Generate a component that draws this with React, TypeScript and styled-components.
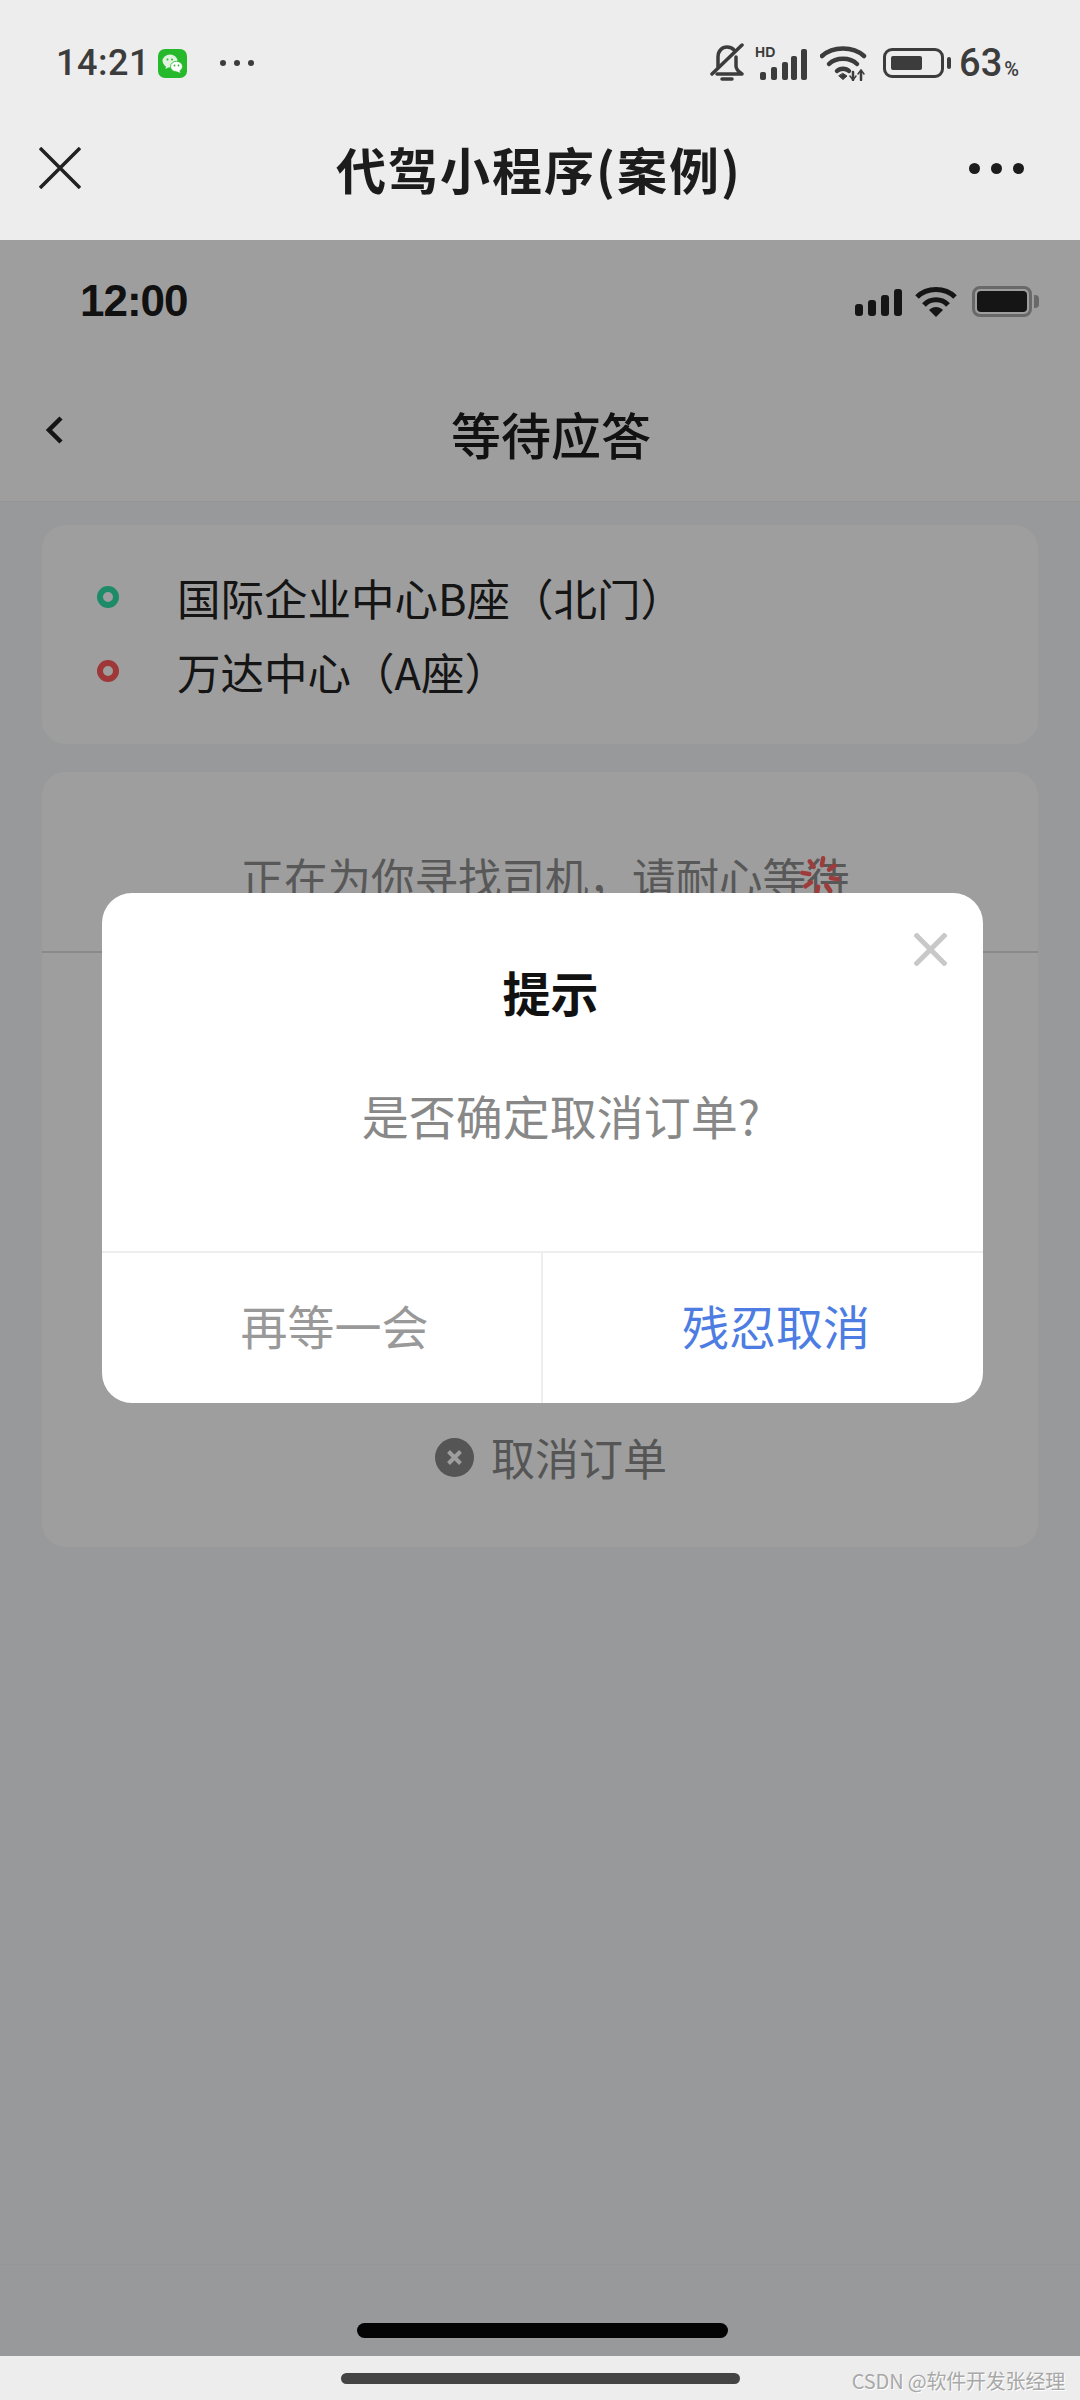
import { styled, createGlobalStyle } from "styled-components";

const cjk = `"Noto Sans CJK SC", "Noto Sans", sans-serif`;

const GlobalStyle = createGlobalStyle`
  html, body {
    margin: 0;
    padding: 0;
    background: #ededed;
  }
  * {
    box-sizing: border-box;
  }
`;

const BellOff = () => (
  <svg width="36" height="40" viewBox="0 0 36 40" fill="none" stroke="#3c3c3c" strokeWidth="3.5" strokeLinecap="round" strokeLinejoin="round">
    <path d="M9 24 V14 C9 8 13 4 18 4 C21 4 23.5 5 25.5 7.5" />
    <path d="M27 14 V23 C27 27 30 29 33 31 H8" />
    <path d="M3 31 L33 2" />
    <path d="M13 36 H23" strokeWidth="3.5" />
  </svg>
);

const WeChatIcon = () => (
  <svg width="29" height="29" viewBox="0 0 29 29">
    <rect width="29" height="29" rx="7" fill="#27b92c" />
    <ellipse cx="12" cy="12" rx="7.5" ry="6.5" fill="#dff3df" />
    <path d="M8 16 L7.5 20 L12 17.5 Z" fill="#dff3df" />
    <ellipse cx="18.5" cy="17.5" rx="6" ry="5.2" fill="#fff" stroke="#27b92c" strokeWidth="0.8" />
    <path d="M21 21 L22.5 24 L18 22 Z" fill="#fff" />
    <circle cx="9.5" cy="10.5" r="1" fill="#27b92c" />
    <circle cx="14" cy="10.5" r="1" fill="#27b92c" />
    <circle cx="16.5" cy="16.5" r="0.9" fill="#27b92c" />
    <circle cx="20.5" cy="16.5" r="0.9" fill="#27b92c" />
  </svg>
);

const SignalHd = () => (
  <svg width="50" height="34" viewBox="0 0 50 34" fill="#3c3c3c">
    <rect x="1" y="24" width="6" height="8" rx="2" />
    <rect x="12" y="19" width="6" height="13" rx="2" />
    <rect x="23" y="14" width="6" height="18" rx="2" />
    <rect x="32" y="8" width="6" height="24" rx="2" />
    <rect x="42" y="1" width="6" height="31" rx="2" />
  </svg>
);

const WifiArrows = () => (
  <svg width="48" height="36" viewBox="0 0 48 36" fill="none" stroke="#3c3c3c" strokeWidth="4.5" strokeLinecap="round">
    <path d="M2 11 C13 1 33 1 44 11" />
    <path d="M9 19 C16 12 30 12 37 19" />
    <path d="M17 26 C20 23 26 23 29 26" />
    <path d="M19 31 L23 34.5 L27 31 L23 28.5 Z" fill="#3c3c3c" strokeWidth="1" />
    <path d="M33 27 V35 M41 26 V35" strokeWidth="2.5" />
    <path d="M30 31 L33 35 L36 31 M38 29 L41 25 L44 29" strokeWidth="1.5" />
  </svg>
);

const PageWifi = () => (
  <svg width="42" height="31" viewBox="0 0 42 31" fill="none" stroke="#222" strokeWidth="5">
    <path d="M2 11 C12 1 30 1 40 11" />
    <path d="M9 19 C15 12 27 12 33 19" />
    <path d="M14 24 L21 31 L28 24 C24 20 18 20 14 24 Z" fill="#222" stroke="none" />
  </svg>
);

const SpinnerDashes = () => (
  <svg width="42" height="42" viewBox="0 0 42 42" stroke="#ff6060" strokeWidth="4.5" strokeLinecap="round">
    {Array.from({ length: 8 }).map((_, i) => (
      <line key={i} x1="21" y1="3" x2="21" y2="10" transform={`rotate(${i * 45 + 10} 21 21)`} />
    ))}
  </svg>
);

const Screen = styled.div`
  width: 1080px;
  height: 2400px;
  overflow: hidden;
  display: flex;
  flex-direction: column;
  background: #ededed;
  font-family: ${cjk};
`;

const WechatBar = styled.div`
  height: 240px;
  flex-shrink: 0;
  background: #ededed;
`;

const PhoneStatus = styled.div`
  height: 126px;
  padding: 0 61px 0 56px;
  display: flex;
  align-items: center;
  justify-content: space-between;
`;

const StatusGroup = styled.div`
  display: flex;
  align-items: center;
`;

const ClockText = styled.span`
  font-family: Roboto, sans-serif;
  font-weight: 500;
  font-size: 36px;
  letter-spacing: 0.5px;
  color: #3c3c3c;
  margin-right: 8px;
`;

const DotGroup = styled.div<{ $size: number; $gap: number; $color: string }>`
  display: flex;
  gap: ${(p) => p.$gap}px;
  & > i {
    display: block;
    width: ${(p) => p.$size}px;
    height: ${(p) => p.$size}px;
    border-radius: 50%;
    background: ${(p) => p.$color};
  }
`;

const NoticeDots = styled(DotGroup)`
  margin-left: 33px;
`;

const SignalBox = styled.div`
  position: relative;
  margin: 4px 11px 0 14px;
  display: flex;
`;

const HdMark = styled.span`
  position: absolute;
  left: -4px;
  top: -2px;
  font-family: "Liberation Sans", sans-serif;
  font-weight: 700;
  font-size: 14px;
  line-height: 13px;
  color: #3c3c3c;
`;

const PhoneBattery = styled.div`
  width: 61px;
  height: 30px;
  margin-left: 15px;
  padding: 5px;
  border: 3px solid #3c3c3c;
  border-radius: 9px;
  position: relative;
  &::before {
    content: "";
    display: block;
    width: 31px;
    height: 100%;
    background: #3c3c3c;
    border-radius: 2px;
  }
  &::after {
    content: "";
    position: absolute;
    right: -10px;
    top: 6px;
    width: 4px;
    height: 12px;
    border-radius: 2px;
    background: #3c3c3c;
  }
`;

const BatteryText = styled.span`
  margin-left: 15px;
  font-family: Roboto, sans-serif;
  font-weight: 500;
  font-size: 38px;
  color: #3c3c3c;
  & > small {
    font-size: 20px;
    margin-left: 2px;
  }
`;

const CapsuleRow = styled.div`
  height: 84px;
  padding: 0 41px 0 39px;
  display: grid;
  grid-template-columns: 1fr auto 1fr;
  align-items: center;
`;

const CapsuleTitle = styled.div`
  font-size: 50px;
  font-weight: 700;
  letter-spacing: 2px;
  line-height: 60px;
  color: #1c1c1c;
`;

const CapsuleMore = styled(DotGroup)`
  justify-self: end;
  margin-right: 15px;
`;

const Page = styled.div`
  position: relative;
  height: 2116px;
  flex-shrink: 0;
  display: flex;
  flex-direction: column;
  background: #f6f7f9;
`;

const AppHeader = styled.div`
  height: 262px;
  flex-shrink: 0;
  background: #fff;
  border-bottom: 1px solid #f0f0f0;
`;

const AppStatus = styled.div`
  height: 120px;
  padding: 2px 41px 0 80px;
  display: flex;
  align-items: center;
  justify-content: space-between;
`;

const AppClock = styled.span`
  font-family: "Liberation Sans", sans-serif;
  font-weight: 700;
  font-size: 44px;
  letter-spacing: -1px;
  color: #1c1c1c;
`;

const AppSignal = styled.div`
  display: flex;
  align-items: flex-end;
  gap: 5px;
  height: 27px;
  margin: 2px 13px 0 0;
`;

const SignalBar = styled.span<{ $height: number }>`
  width: 8px;
  height: ${(p) => p.$height}px;
  border-radius: 3px;
  background: #222;
`;

const AppBattery = styled.div`
  width: 60px;
  height: 31px;
  margin-left: 15px;
  margin-right: 7px;
  padding: 2px;
  border: 3px solid #aaa;
  border-radius: 8px;
  position: relative;
  &::before {
    content: "";
    display: block;
    height: 100%;
    border-radius: 4px;
    background: #222;
  }
  &::after {
    content: "";
    position: absolute;
    right: -10px;
    top: 6px;
    width: 5px;
    height: 13px;
    border-radius: 0 4px 4px 0;
    background: #aaa;
  }
`;

const NavRow = styled.div`
  height: 140px;
  padding: 0 24px 0 46px;
  display: grid;
  grid-template-columns: 1fr auto 1fr;
  align-items: center;
`;

const NavTitle = styled.div`
  font-size: 50px;
  font-weight: 500;
  line-height: 60px;
  padding-top: 6px;
  color: #1c1c1c;
`;

const Main = styled.div`
  flex: 1;
  padding: 23px 42px 0;
  display: flex;
  flex-direction: column;
  gap: 28px;
`;

const Card = styled.div`
  background: #fff;
  border-radius: 24px;
`;

const RouteCard = styled(Card)`
  height: 219px;
  padding: 45px 55px 0;
  display: flex;
  flex-direction: column;
  gap: 20px;
`;

const RouteRow = styled.div`
  display: flex;
  align-items: center;
  height: 54px;
`;

const RouteDot = styled.span<{ $color: string }>`
  width: 22px;
  height: 22px;
  margin-right: 58px;
  border-radius: 50%;
  border: 6px solid ${(p) => p.$color};
`;

const RouteText = styled.span`
  font-size: 43.5px;
  font-weight: 400;
  color: #222;
`;

const WaitCard = styled(Card)`
  height: 775px;
  display: flex;
  flex-direction: column;
`;

const WaitSection = styled.div`
  height: 181px;
  padding: 83px 0 0 10px;
  display: flex;
  justify-content: center;
  border-bottom: 2px solid #ddd;
`;

const WaitText = styled.span`
  position: relative;
  font-size: 43.5px;
  line-height: 44px;
  color: #8e8e8e;
`;

const WaitSpinner = styled.span`
  position: absolute;
  right: 9px;
  top: 0;
  display: flex;
`;

const CancelRow = styled.div`
  margin-top: auto;
  padding: 0 0 68px 22px;
  display: flex;
  align-items: center;
  justify-content: center;
  gap: 17px;
`;

const CancelIcon = styled.span`
  display: flex;
`;

const CancelText = styled.span`
  font-size: 44px;
  line-height: 44px;
  color: #8a8a8a;
`;

const TabFooter = styled.div`
  height: 92px;
  flex-shrink: 0;
  padding: 58px 0 0 5px;
  display: flex;
  justify-content: center;
  border-top: 1px solid #f0f0f0;
`;

const HomeBar = styled.div`
  width: 371px;
  height: 15px;
  border-radius: 8px;
  background: #070707;
`;

const Backdrop = styled.div`
  position: absolute;
  inset: 0;
  padding: 653px 0 0 102px;
  background: rgba(0, 0, 0, 0.38);
`;

const Modal = styled.div`
  position: relative;
  width: 881px;
  height: 510px;
  display: flex;
  flex-direction: column;
  border-radius: 30px;
  background: #fff;
`;

const ModalClose = styled.span`
  position: absolute;
  right: 36px;
  top: 40px;
  display: flex;
`;

const ModalBody = styled.div`
  height: 360px;
  padding-top: 74px;
  display: flex;
  flex-direction: column;
  align-items: center;
  border-bottom: 2px solid #eee;
`;

const ModalTitle = styled.div`
  padding-left: 16px;
  font-size: 48px;
  font-weight: 700;
  line-height: 48px;
  color: #111;
`;

const ModalMessage = styled.div`
  margin-top: 76px;
  padding-left: 37px;
  font-size: 47px;
  line-height: 48px;
  color: #888;
`;

const ModalActions = styled.div`
  flex: 1;
  display: flex;
`;

const ModalAction = styled.div<{ $primary?: boolean }>`
  flex: 1;
  padding: 0 0 8px 26px;
  display: flex;
  align-items: center;
  justify-content: center;
  font-size: 47px;
  color: ${(p) => (p.$primary ? "#4d7de2" : "#999")};
  &:first-child {
    flex: 0 0 439px;
  }
  & + & {
    border-left: 2px solid #eee;
  }
`;

const SystemBar = styled.div`
  position: relative;
  flex: 1;
  padding: 17px 0 0;
  display: flex;
  justify-content: center;
  background: #ededed;
`;

const SystemPill = styled.div`
  width: 399px;
  height: 11px;
  border-radius: 6px;
  background: #444;
`;

const Watermark = styled.span`
  position: absolute;
  right: 15px;
  top: 12px;
  font-size: 20px;
  letter-spacing: -0.2px;
  line-height: 26px;
  color: #a8a8a8;
  text-shadow: 1px 1px 0 #fff;
`;

export default function App() {
  return (
    <Screen>
      <GlobalStyle />
      <WechatBar>
        <PhoneStatus>
          <StatusGroup>
            <ClockText>14:21</ClockText>
            <WeChatIcon />
            <NoticeDots $size={6} $gap={8} $color="#3c3c3c">
              <i />
              <i />
              <i />
            </NoticeDots>
          </StatusGroup>
          <StatusGroup>
            <BellOff />
            <SignalBox>
              <HdMark>HD</HdMark>
              <SignalHd />
            </SignalBox>
            <WifiArrows />
            <PhoneBattery />
            <BatteryText>
              63<small>%</small>
            </BatteryText>
          </StatusGroup>
        </PhoneStatus>
        <CapsuleRow>
          <svg width="42" height="42" viewBox="0 0 42 42" stroke="#222" strokeWidth="3.5">
            <path d="M1 1 L41 41 M41 1 L1 41" />
          </svg>
          <CapsuleTitle>代驾小程序(案例)</CapsuleTitle>
          <CapsuleMore $size={11} $gap={11} $color="#1c1c1c">
            <i />
            <i />
            <i />
          </CapsuleMore>
        </CapsuleRow>
      </WechatBar>

      <Page>
        <AppHeader>
          <AppStatus>
            <AppClock>12:00</AppClock>
            <StatusGroup>
              <AppSignal>
                <SignalBar $height={12} />
                <SignalBar $height={16} />
                <SignalBar $height={21} />
                <SignalBar $height={27} />
              </AppSignal>
              <PageWifi />
              <AppBattery />
            </StatusGroup>
          </AppStatus>
          <NavRow>
            <svg width="17" height="28" viewBox="0 0 17 28" fill="none" stroke="#222" strokeWidth="4.5">
              <path d="M15 2 L3 14 L15 26" />
            </svg>
            <NavTitle>等待应答</NavTitle>
          </NavRow>
        </AppHeader>

        <Main>
          <RouteCard>
            <RouteRow>
              <RouteDot $color="#2fdfa8" />
              <RouteText>国际企业中心B座（北门）</RouteText>
            </RouteRow>
            <RouteRow>
              <RouteDot $color="#ff5a5a" />
              <RouteText>万达中心（A座）</RouteText>
            </RouteRow>
          </RouteCard>
          <WaitCard>
            <WaitSection>
              <WaitText>
                正在为你寻找司机，请耐心等待
                <WaitSpinner>
                  <SpinnerDashes />
                </WaitSpinner>
              </WaitText>
            </WaitSection>
            <CancelRow>
              <CancelIcon>
                <svg width="39" height="39" viewBox="0 0 39 39">
                  <circle cx="19.5" cy="19.5" r="19.5" fill="#8a8a8a" />
                  <path d="M13.5 13.5 L25.5 25.5 M25.5 13.5 L13.5 25.5" stroke="#fff" strokeWidth="4" />
                </svg>
              </CancelIcon>
              <CancelText>取消订单</CancelText>
            </CancelRow>
          </WaitCard>
        </Main>

        <TabFooter>
          <HomeBar />
        </TabFooter>

        <Backdrop>
          <Modal>
            <ModalClose>
              <svg width="33" height="33" viewBox="0 0 33 33" stroke="#c8c8c8" strokeWidth="5">
                <path d="M1 1 L32 32 M32 1 L1 32" />
              </svg>
            </ModalClose>
            <ModalBody>
              <ModalTitle>提示</ModalTitle>
              <ModalMessage>是否确定取消订单?</ModalMessage>
            </ModalBody>
            <ModalActions>
              <ModalAction>再等一会</ModalAction>
              <ModalAction $primary>残忍取消</ModalAction>
            </ModalActions>
          </Modal>
        </Backdrop>
      </Page>

      <SystemBar>
        <SystemPill />
        <Watermark>CSDN @软件开发张经理</Watermark>
      </SystemBar>
    </Screen>
  );
}
